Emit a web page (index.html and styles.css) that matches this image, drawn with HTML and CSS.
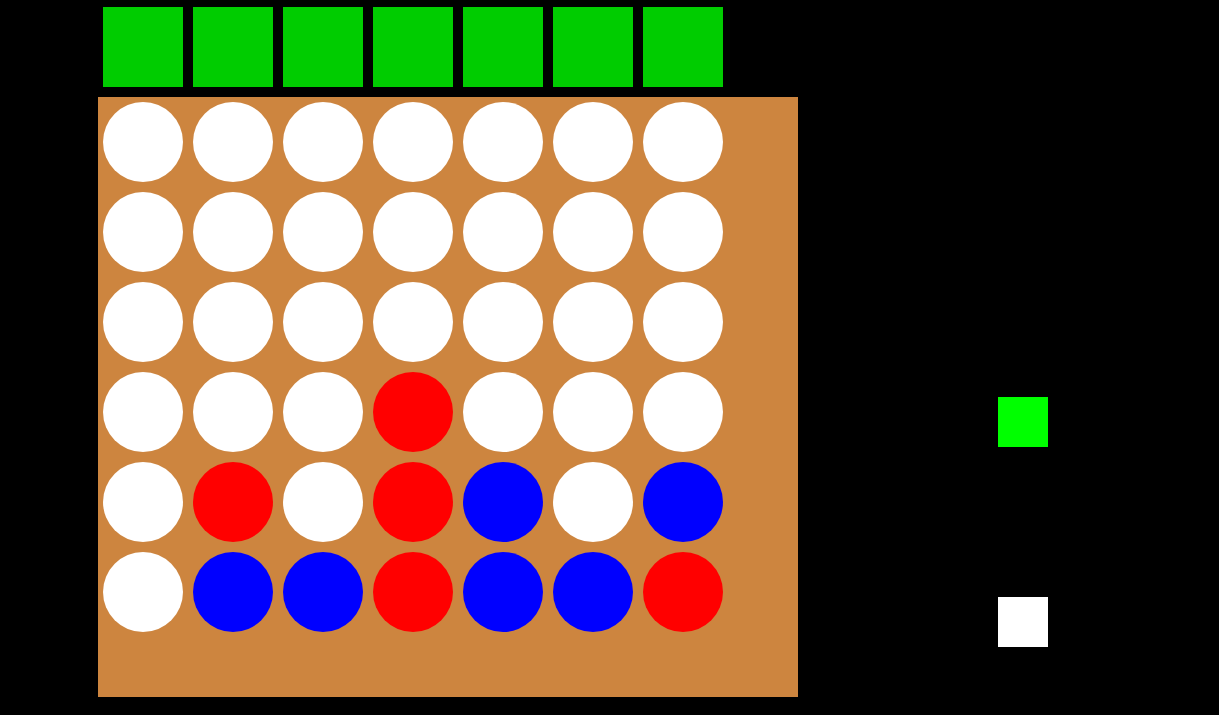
FILE: index.html
```html
<!DOCTYPE html>
<html lang="en">
<head>
  <meta charset="UTF-8" />
  <title>Connect Four</title>
  <link rel="stylesheet" href="styles.css">
</head>
<body>
  <div class="game">
    <div class="left">
      <div class="drops">
        <div class="drop"></div><div class="drop"></div><div class="drop"></div><div class="drop"></div>
        <div class="drop"></div><div class="drop"></div><div class="drop"></div>
      </div>
      <div class="board" id="board"></div>
    </div>
    <div class="side">
      <div class="turn green"></div>
      <div class="turn white"></div>
    </div>
  </div>

  <script>
    const rows = [
      'WWWWWWW',
      'WWWWWWW',
      'WWWWWWW',
      'WWWRWWW',
      'WRWRBWB',
      'WBBRBBR'
    ];
    const names = { W: 'empty', R: 'red', B: 'blue' };
    const board = document.getElementById('board');
    rows.forEach(row => {
      for (const c of row) {
        const cell = document.createElement('div');
        cell.className = 'cell ' + names[c];
        board.appendChild(cell);
      }
    });
  </script>
</body>
</html>
```

FILE: styles.css
```css
body {
  margin: 0;
  background: #000;
  height: 715px;
  overflow: hidden;
}

.game {
  display: flex;
}

.left {
  padding-left: 98px;
  padding-top: 7px;
}

.drops {
  display: flex;
  gap: 10px;
  padding-left: 5px;
  margin-bottom: 10px;
}

.drop {
  width: 80px;
  height: 80px;
  background: #00cc00;
}

.board {
  width: 700px;
  height: 600px;
  box-sizing: border-box;
  padding: 5px;
  background: #cd853f;
  display: grid;
  grid-template-columns: repeat(7, 80px);
  grid-auto-rows: 80px;
  gap: 10px;
  align-content: start;
}

.cell {
  border-radius: 50%;
}

.cell.empty { background: #fff; }
.cell.red { background: #f00; }
.cell.blue { background: #00f; }

.side {
  margin-left: 200px;
  padding-top: 397px;
  display: flex;
  flex-direction: column;
  gap: 150px;
}

.turn {
  width: 50px;
  height: 50px;
}

.turn.green { background: #0f0; }
.turn.white { background: #fff; }
```
